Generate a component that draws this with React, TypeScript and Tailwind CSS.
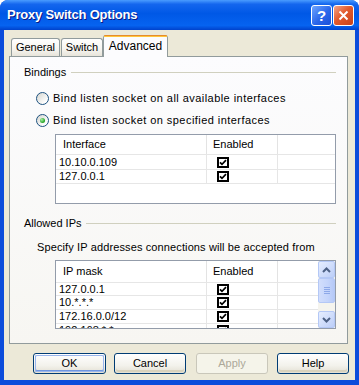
import React from "react";

function Check() {
  return (
    <span className="inline-flex w-[12px] h-[11px] border-2 border-black bg-white items-center justify-center">
      <svg width="8" height="7" viewBox="0 0 8 7">
        <path d="M1 3.3 L3 5.3 L7 1.2" stroke="black" strokeWidth="1.7" fill="none" />
      </svg>
    </span>
  );
}

function Radio({ checked }: { checked?: boolean }) {
  return (
    <span className="w-[13px] h-[13px] shrink-0 rounded-full border border-[#1C5180] bg-[linear-gradient(135deg,#D5D5CF,#FFFFFF_80%)] flex items-center justify-center">
      {checked && (
        <span className="w-[5px] h-[5px] rounded-full bg-[radial-gradient(circle_at_35%_35%,#A8F0A6,#21A121_70%)]" />
      )}
    </span>
  );
}

function GroupHeader({ label, mt }: { label: string; mt: string }) {
  return (
    <div className={`flex items-center h-[13px] ml-[14px] mr-[11px] ${mt}`}>
      <span className="leading-[13px]">{label}</span>
      <div className="flex-1 h-px bg-[#D0D0BF] ml-[5px]" />
    </div>
  );
}

function Row({ text, h }: { text: string; h: string }) {
  return (
    <div className={`flex ${h} border-b border-[#E6E6E6] shrink-0`}>
      <div className="w-[151px] border-r border-[#E6E6E6] pl-[3px] flex items-center leading-[13px] whitespace-nowrap overflow-hidden">
        {text}
      </div>
      <div className="w-[71px] border-r border-[#E6E6E6] pl-[10px] flex items-center">
        <Check />
      </div>
      <div className="flex-1" />
    </div>
  );
}

function Header({ a, h }: { a: string; h: string }) {
  return (
    <div className={`flex ${h} border-b border-[#E6E6E6] shrink-0 bg-white`}>
      <div className="w-[151px] border-r border-[#E3E3E3] pl-[7px] flex items-center">{a}</div>
      <div className="w-[71px] border-r border-[#E3E3E3] pl-[6px] flex items-center">Enabled</div>
      <div className="flex-1" />
    </div>
  );
}

function ScrollBtn({ dir }: { dir: "up" | "down" }) {
  return (
    <div className="h-[17px] shrink-0 rounded-[2px] border border-[#B4C8F6] bg-[linear-gradient(135deg,#E6EEFF,#BCCEF8)] flex items-center justify-center">
      <svg width="9" height="6" viewBox="0 0 9 6">
        {dir === "up" ? (
          <path d="M1 5 L4.5 1.5 L8 5" stroke="#4D6185" strokeWidth="2" fill="none" />
        ) : (
          <path d="M1 1 L4.5 4.5 L8 1" stroke="#4D6185" strokeWidth="2" fill="none" />
        )}
      </svg>
    </div>
  );
}

function ScrollBar() {
  return (
    <div className="w-[17px] flex flex-col bg-[#F5F4EE]">
      <ScrollBtn dir="up" />
      <div className="h-[25px] shrink-0 rounded-[2px] border border-[#B4C8F6] bg-[linear-gradient(90deg,#D2DEFC,#C4D4FB_60%,#B6C9F7)] flex flex-col items-center justify-center gap-[1px]">
        <div className="w-[6px] h-px bg-[#8DA8E8]" />
        <div className="w-[6px] h-px bg-[#8DA8E8]" />
        <div className="w-[6px] h-px bg-[#8DA8E8]" />
        <div className="w-[6px] h-px bg-[#8DA8E8]" />
      </div>
      <div className="flex-1" />
      <ScrollBtn dir="down" />
    </div>
  );
}

function Button({ label, w, ml, primary, disabled }: { label: string; w: string; ml: string; primary?: boolean; disabled?: boolean }) {
  if (disabled) {
    return (
      <div className={`${w} ${ml} h-[21px] rounded-[3px] border border-[#C9C7BA] bg-[#F5F4EA] text-[#ACA899] flex items-center justify-center`}>
        {label}
      </div>
    );
  }
  return (
    <div className={`${w} ${ml} h-[21px] rounded-[3px] border border-[#003C74] bg-[linear-gradient(180deg,#FFFFFF,#F3F2EC_60%,#E3E0D3)] flex items-center justify-center p-px`}>
      <div
        className={`w-full h-full rounded-[2px] flex items-center justify-center ${
          primary ? "shadow-[inset_0_0_0_1px_#9AB6EC,inset_0_-1px_0_1px_#6E96E0]" : "shadow-[inset_0_-2px_0_#D8D2BD]"
        }`}
      >
        {label}
      </div>
    </div>
  );
}

export default function App() {
  return (
    <div className="w-[359px] h-[385px] flex flex-col rounded-t-[8px] bg-[#0B4CDB] font-['Liberation_Sans',Arial,sans-serif] text-[11px] text-black overflow-hidden">
      {/* Title bar */}
      <div className="h-[30px] shrink-0 flex items-center bg-[linear-gradient(180deg,#4A9CFF_0%,#1466EE_14%,#0058E6_45%,#0663F0_85%,#0042CC_100%)] pr-[5px]">
        <span className="ml-[7px] text-white font-bold text-[13px] [text-shadow:1px_1px_0_#0A1883] tracking-[-0.2px]">
          Proxy Switch Options
        </span>
        <div className="ml-auto w-[21px] h-[21px] rounded-[3px] border border-white bg-[linear-gradient(135deg,#6FA6FF,#2A66EA_55%,#1A50D8)] flex items-center justify-center text-white font-bold text-[15px] leading-none">
          ?
        </div>
        <div className="ml-[1px] w-[21px] h-[21px] rounded-[3px] border border-white bg-[linear-gradient(135deg,#F3A48A,#E25A2C_45%,#C8421A)] flex items-center justify-center">
          <svg width="11" height="11" viewBox="0 0 11 11">
            <path d="M1.5 1.5 L9.5 9.5 M9.5 1.5 L1.5 9.5" stroke="white" strokeWidth="2" />
          </svg>
        </div>
      </div>

      {/* Client */}
      <div className="flex-1 mx-[4px] mb-[5px] bg-[#ECE9D8] flex flex-col">
        <div className="pt-[5px] pl-[5px] pr-[7px]">
          {/* Tabs */}
          <div className="flex items-end h-[21px] ml-[2px] relative z-10">
            <div className="w-[49px] h-[18px] rounded-t-[3px] border border-b-0 border-[#919B9C] bg-[linear-gradient(180deg,#FFFFFF,#F6F5F0_60%,#E7E4DA)] flex items-center justify-center">
              General
            </div>
            <div className="ml-[1px] w-[42px] h-[18px] rounded-t-[3px] border border-b-0 border-[#919B9C] bg-[linear-gradient(180deg,#FFFFFF,#F6F5F0_60%,#E7E4DA)] flex items-center justify-center">
              Switch
            </div>
            <div className="w-[65px] h-[22px] -mb-px rounded-t-[3px] border-x border-[#919B9C] bg-[#FCFCFE] flex flex-col">
              <div className="h-px bg-[#E68B2C] rounded-t-[3px]" />
              <div className="h-[2px] bg-[#FFC73C]" />
              <div className="flex-1 flex items-center justify-center pb-[2px] text-[12px]">Advanced</div>
            </div>
          </div>
          {/* Panel */}
          <div className="h-[288px] border border-[#919B9C] bg-[linear-gradient(180deg,#FCFCFE,#F7F6F2)] flex flex-col">
            <GroupHeader label="Bindings" mt="mt-[9px]" />
            <div className="flex items-center h-[13px] mt-[13px] ml-[26px]">
              <Radio />
              <span className="ml-[4px] leading-[13px] tracking-[0.45px]">Bind listen socket on all available interfaces</span>
            </div>
            <div className="flex items-center h-[13px] mt-[9px] ml-[26px]">
              <Radio checked />
              <span className="ml-[4px] leading-[13px] tracking-[0.45px]">Bind listen socket on specified interfaces</span>
            </div>
            <div className="mt-[7px] ml-[45px] w-[281px] h-[70px] border border-[#939CAA] bg-white flex flex-col overflow-hidden">
              <Header a="Interface" h="h-[20px]" />
              <Row text="10.10.0.109" h="h-[15px]" />
              <Row text="127.0.0.1" h="h-[14px]" />
            </div>
            <GroupHeader label="Allowed IPs" mt="mt-[13px]" />
            <div className="mt-[11px] ml-[27px] h-[13px] leading-[13px] tracking-[0.12px]">
              Specify IP addresses connections will be accepted from
            </div>
            <div className="mt-[6px] ml-[45px] w-[281px] h-[69px] border border-[#939CAA] bg-white flex overflow-hidden">
              <div className="flex-1 flex flex-col overflow-hidden">
                <Header a="IP mask" h="h-[22px]" />
                <Row text="127.0.0.1" h="h-[13px]" />
                <Row text="10.*.*.*" h="h-[14px]" />
                <Row text="172.16.0.0/12" h="h-[14px]" />
                <Row text="192.168.*.*" h="h-[14px]" />
              </div>
              <ScrollBar />
            </div>
          </div>
        </div>
        {/* Buttons */}
        <div className="flex mt-[9px]">
          <Button label="OK" w="w-[73px]" ml="ml-[29px]" primary />
          <Button label="Cancel" w="w-[72px]" ml="ml-[8px]" />
          <Button label="Apply" w="w-[72px]" ml="ml-[10px]" disabled />
          <Button label="Help" w="w-[72px]" ml="ml-[9px]" />
        </div>
      </div>
    </div>
  );
}
